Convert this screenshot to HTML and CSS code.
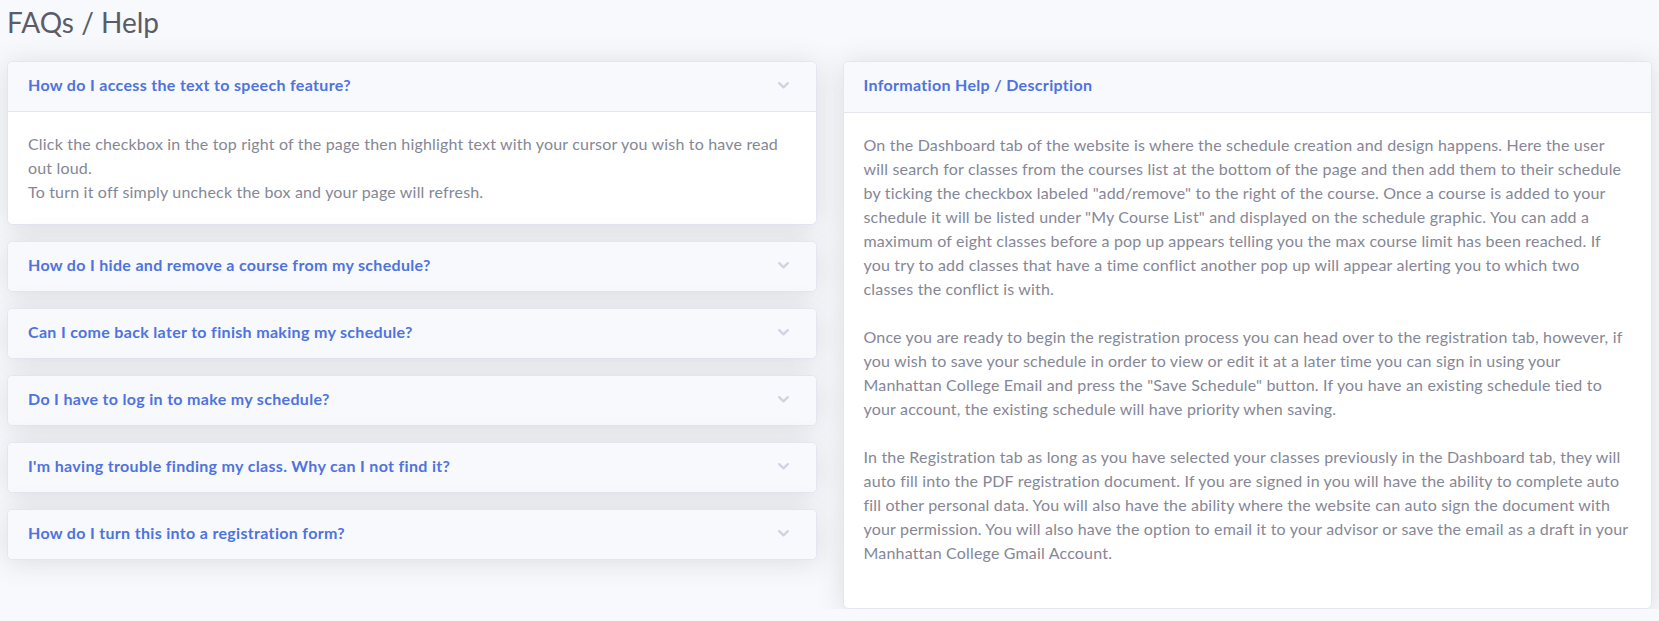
FILE: index.html
```html
<!DOCTYPE html>
<html lang="en">
<head>
<meta charset="utf-8">
<title>FAQs / Help</title>
<link rel="stylesheet" href="styles.css">
</head>
<body>
<div class="page">
  <h1 class="page-title">FAQs / Help</h1>
  <div class="columns">
    <div class="faq-list">
      <div class="card">
        <div class="card-header toggle">
          <span class="q">How do I access the text to speech feature?</span>
          <svg class="chev" width="11" height="7" viewBox="0 0 11 7"><polyline points="1.2,1.2 5.5,5.3 9.8,1.2" fill="none" stroke="#d1d3e2" stroke-width="2.4" stroke-linecap="round" stroke-linejoin="round"/></svg>
        </div>
        <div class="card-body">
          Click the checkbox in the top right of the page then highlight text with your cursor you wish to have read out loud.<br>
          To turn it off simply uncheck the box and your page will refresh.
        </div>
      </div>
      <div class="card">
        <div class="card-header toggle">
          <span class="q">How do I hide and remove a course from my schedule?</span>
          <svg class="chev" width="11" height="7" viewBox="0 0 11 7"><polyline points="1.2,1.2 5.5,5.3 9.8,1.2" fill="none" stroke="#d1d3e2" stroke-width="2.4" stroke-linecap="round" stroke-linejoin="round"/></svg>
        </div>
      </div>
      <div class="card">
        <div class="card-header toggle">
          <span class="q">Can I come back later to finish making my schedule?</span>
          <svg class="chev" width="11" height="7" viewBox="0 0 11 7"><polyline points="1.2,1.2 5.5,5.3 9.8,1.2" fill="none" stroke="#d1d3e2" stroke-width="2.4" stroke-linecap="round" stroke-linejoin="round"/></svg>
        </div>
      </div>
      <div class="card">
        <div class="card-header toggle">
          <span class="q">Do I have to log in to make my schedule?</span>
          <svg class="chev" width="11" height="7" viewBox="0 0 11 7"><polyline points="1.2,1.2 5.5,5.3 9.8,1.2" fill="none" stroke="#d1d3e2" stroke-width="2.4" stroke-linecap="round" stroke-linejoin="round"/></svg>
        </div>
      </div>
      <div class="card">
        <div class="card-header toggle">
          <span class="q">I'm having trouble finding my class. Why can I not find it?</span>
          <svg class="chev" width="11" height="7" viewBox="0 0 11 7"><polyline points="1.2,1.2 5.5,5.3 9.8,1.2" fill="none" stroke="#d1d3e2" stroke-width="2.4" stroke-linecap="round" stroke-linejoin="round"/></svg>
        </div>
      </div>
      <div class="card">
        <div class="card-header toggle">
          <span class="q">How do I turn this into a registration form?</span>
          <svg class="chev" width="11" height="7" viewBox="0 0 11 7"><polyline points="1.2,1.2 5.5,5.3 9.8,1.2" fill="none" stroke="#d1d3e2" stroke-width="2.4" stroke-linecap="round" stroke-linejoin="round"/></svg>
        </div>
      </div>
    </div>
    <div class="info">
      <div class="card">
        <div class="card-header info-header">
          <span class="q">Information Help / Description</span>
        </div>
        <div class="card-body info-body">
          <p>On the Dashboard tab of the website is where the schedule creation and design happens. Here the user will search for classes from the courses list at the bottom of the page and then add them to their schedule by ticking the checkbox labeled "add/remove" to the right of the course. Once a course is added to your schedule it will be listed under "My Course List" and displayed on the schedule graphic. You can add a maximum of eight classes before a pop up appears telling you the max course limit has been reached. If you try to add classes that have a time conflict another pop up will appear alerting you to which two classes the conflict is with.</p>
          <p>Once you are ready to begin the registration process you can head over to the registration tab, however, if you wish to save your schedule in order to view or edit it at a later time you can sign in using your Manhattan College Email and press the "Save Schedule" button. If you have an existing schedule tied to your account, the existing schedule will have priority when saving.</p>
          <p>In the Registration tab as long as you have selected your classes previously in the Dashboard tab, they will auto fill into the PDF registration document. If you are signed in you will have the ability to complete auto fill other personal data. You will also have the ability where the website can auto sign the document with your permission. You will also have the option to email it to your advisor or save the email as a draft in your Manhattan College Gmail Account.</p>
        </div>
      </div>
    </div>
  </div>
</div>
</body>
</html>
```

FILE: styles.css
```css
html, body {
  margin: 0;
  padding: 0;
}
body {
  background: #f8f9fc;
  font-family: Lato, "Noto Sans", "Liberation Sans", sans-serif;
  font-size: 16px;
  line-height: 24px;
  color: #858796;
  letter-spacing: 0.18px;
}
.page {
  padding: 6px 7px 0 7px;
}
.page-title {
  margin: 0 0 21px 0;
  font-size: 28px;
  font-weight: 400;
  line-height: 1.2;
  color: #5a5c69;
  letter-spacing: 0;
}
.columns {
  display: grid;
  grid-template-columns: 1fr 1fr;
  column-gap: 26px;
  align-items: start;
}
.faq-list {
  display: flex;
  flex-direction: column;
  gap: 16px;
}
.card {
  background: #fff;
  border: 1px solid #e3e6f0;
  border-radius: 5.6px;
  box-shadow: 0 2.4px 28px 0 rgba(58, 59, 69, 0.15);
  overflow: hidden;
}
.card-header {
  background: #f8f9fc;
  padding: 11px 20px 14px 20px;
  display: flex;
  align-items: center;
  justify-content: space-between;
}
.card-header + .card-body {
  border-top: 1px solid #e3e6f0;
}
.q {
  color: #4e73df;
  font-weight: 700;
  letter-spacing: 0.32px;
}
.chev {
  display: block;
  margin-right: 7px;
  margin-top: 2px;
  flex: none;
}
.card-body {
  padding: 20px;
}
.info-header {
  padding: 11px 20px 15px 20px;
}
.info-body {
  padding: 20px 20px 43px 20px;
}
.info-body p {
  margin: 0 0 24px 0;
}
.info-body p:last-child {
  margin-bottom: 0;
}
```
